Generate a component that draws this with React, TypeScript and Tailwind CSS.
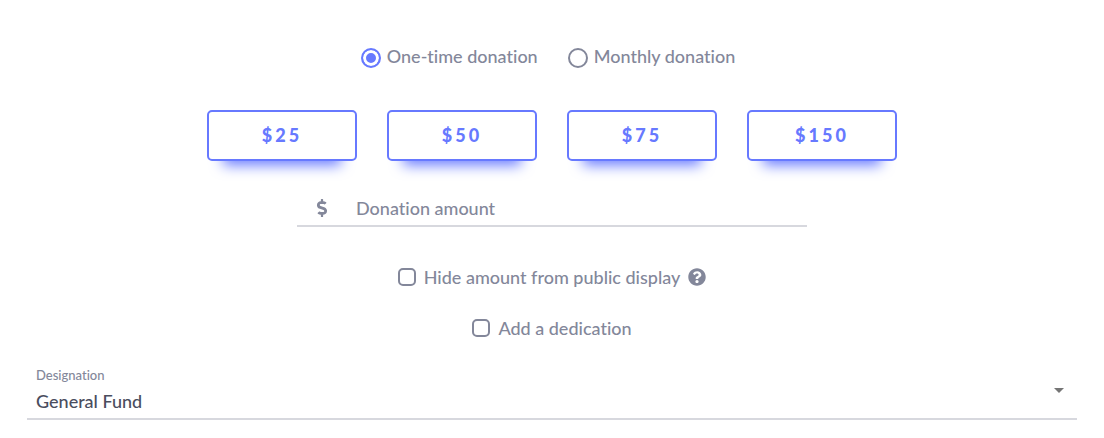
import { useState } from "react";
import { FaDollarSign, FaQuestionCircle } from "react-icons/fa";

const amounts = [25, 50, 75, 150];

function Radio({ label, value, checked, onSelect }: { label: string; value: string; checked: boolean; onSelect: (value: string) => void }) {
  return (
    <label className="flex items-center gap-1.5">
      <input
        type="radio"
        name="frequency"
        value={value}
        checked={checked}
        onChange={() => onSelect(value)}
        className="mt-1 size-5 appearance-none rounded-full border-2 border-[#83879a] bg-white checked:border-[#6779ff] checked:bg-[#6779ff] checked:shadow-[inset_0_0_0_3px_#fff]"
      />
      {label}
    </label>
  );
}

function Checkbox({ label }: { label: string }) {
  return (
    <label className="flex items-center gap-2">
      <input
        type="checkbox"
        className="size-[18px] appearance-none rounded-[5px] border-2 border-[#83879a] bg-white checked:border-[#6779ff] checked:bg-[#6779ff]"
      />
      {label}
    </label>
  );
}

export default function App() {
  const [frequency, setFrequency] = useState("once");
  const [amount, setAmount] = useState("");

  return (
    <form className="flex flex-col items-center bg-white px-[27px] pt-[43px] pb-4 font-['Lato',sans-serif] text-[18px] leading-[26px] font-medium text-[#83879a] [font-variant-ligatures:none]">
      <div className="flex flex-wrap justify-center gap-[30px] pr-2">
        <Radio label="One-time donation" value="once" checked={frequency === "once"} onSelect={setFrequency} />
        <Radio label="Monthly donation" value="monthly" checked={frequency === "monthly"} onSelect={setFrequency} />
      </div>

      <div className="mt-[41px] flex flex-wrap justify-center gap-[30px]">
        {amounts.map((value) => (
          <button
            key={value}
            type="button"
            onClick={() => setAmount(String(value))}
            className="h-[51px] w-[150px] rounded-[5px] border-2 border-[#6779ff] bg-white pb-0.5 font-black tracking-[3px] text-[#6779ff] shadow-[0_20px_14px_-16px_#6779ff]"
          >
            ${value}
          </button>
        ))}
      </div>

      <div className="mt-7 flex w-full max-w-[510px] items-center border-b-2 border-[#d7d8de] pt-1.5 pb-1">
        <FaDollarSign className="ml-4 size-[18px]" aria-hidden="true" />
        <input
          type="text"
          inputMode="decimal"
          aria-label="Donation amount"
          placeholder="Donation amount"
          value={amount}
          onChange={(event) => setAmount(event.target.value)}
          className="ml-[25px] min-w-0 flex-1 bg-transparent outline-none placeholder:text-[#83879a]"
        />
      </div>

      <div className="mt-[37px] flex items-center gap-2">
        <Checkbox label="Hide amount from public display" />
        <button type="button" aria-label="About hiding the amount">
          <FaQuestionCircle className="size-[18px]" />
        </button>
      </div>

      <div className="mt-[25px]">
        <Checkbox label="Add a dedication" />
      </div>

      <div className="mt-6 w-full border-b-2 border-[#d7d8de]">
        <label htmlFor="designation" className="block px-[9px] text-[13px] leading-5">
          Designation
        </label>
        <div className="relative">
          <select
            id="designation"
            className="block w-full appearance-none bg-transparent px-[9px] pt-[3px] pb-1 leading-[26px] text-[#4a4d5e] outline-none"
          >
            <option>General Fund</option>
          </select>
          <svg viewBox="0 0 10 5" className="pointer-events-none absolute top-[3px] right-[13px] h-[5px] w-2.5 fill-[#757575]" aria-hidden="true">
            <path d="M0 0h10L5 5z" />
          </svg>
        </div>
      </div>
    </form>
  );
}
